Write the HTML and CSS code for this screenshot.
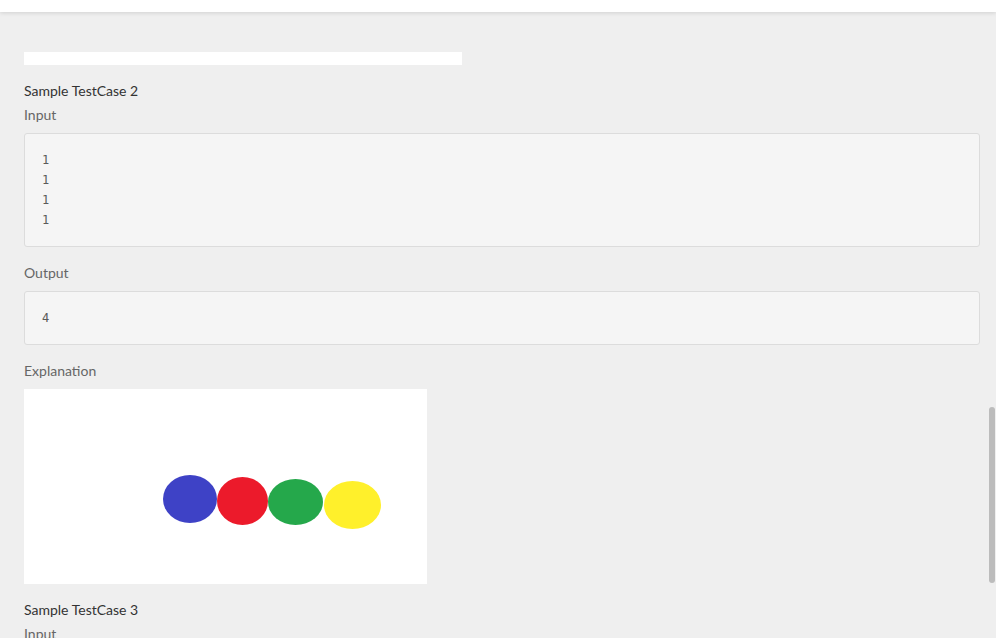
FILE: index.html
```html
<!DOCTYPE html>
<html>
<head>
<meta charset="utf-8">
<link rel="stylesheet" href="styles.css">
</head>
<body>
<div class="topbar"></div>
<main class="content">
  <div class="prev-image"></div>
  <section class="case">
    <div class="case-title">Sample TestCase 2</div>
    <div class="label">Input</div>
    <pre class="code">1
1
1
1</pre>
    <div class="label">Output</div>
    <pre class="code">4</pre>
    <div class="label">Explanation</div>
    <div class="explain-img">
      <svg width="403" height="195" viewBox="0 0 403 195">
        <ellipse cx="166" cy="110" rx="27" ry="24" fill="#3e42c6"/>
        <ellipse cx="218.5" cy="112" rx="25.5" ry="24" fill="#ec1a2b"/>
        <ellipse cx="271.5" cy="113" rx="27.5" ry="23" fill="#25a84b"/>
        <ellipse cx="328.5" cy="116" rx="28.5" ry="24" fill="#fff02b"/>
      </svg>
    </div>
  </section>
  <section class="case">
    <div class="case-title">Sample TestCase 3</div>
    <div class="label">Input</div>
  </section>
</main>
<div class="scroll-thumb"></div>
</body>
</html>
```
FILE: styles.css
```css
html, body {
  margin: 0;
  padding: 0;
  height: 100%;
  overflow: hidden;
}
body {
  background: #efefef;
  font-family: Lato, "Open Sans", sans-serif;
  font-size: 14px;
  line-height: 20px;
  color: #333;
}
.topbar {
  height: 12px;
  background: #fff;
  box-shadow: 0 1px 4px rgba(0, 0, 0, 0.13);
  position: relative;
  z-index: 1;
}
.content {
  padding: 40px 16px 0 24px;
}
.prev-image {
  width: 438px;
  height: 13px;
  background: #fff;
  margin-bottom: 15px;
}
.case-title {
  color: #333;
  padding-top: 1px;
  margin-bottom: 3px;
}
.label {
  color: #666;
  padding-top: 1px;
  margin-bottom: 8px;
}
.code {
  margin: 0 0 15px 0;
  background: #f5f5f5;
  border: 1px solid #dcdcdc;
  border-radius: 3px;
  padding: 16px 17px 16px;
  font-family: "DejaVu Sans Mono", monospace;
  font-size: 12px;
  line-height: 20px;
  color: #5a5a5a;
}
.explain-img {
  width: 403px;
  height: 195px;
  background: #fff;
  margin-bottom: 15px;
}
.explain-img svg {
  display: block;
}
.scroll-thumb {
  position: fixed;
  left: 989px;
  top: 407px;
  width: 6px;
  height: 176px;
  border-radius: 3px;
  background: #bcbcbc;
}
```
